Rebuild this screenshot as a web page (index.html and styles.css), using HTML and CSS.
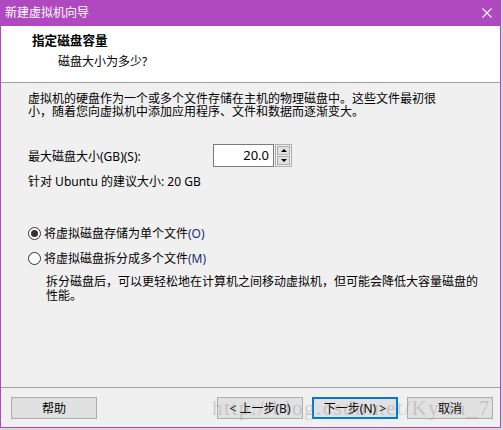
FILE: index.html
```html
<!DOCTYPE html>
<html lang="zh-CN">
<head>
    <meta charset="UTF-8">
    <title>新建虚拟机向导</title>
    <link rel="stylesheet" href="styles.css">
</head>
<body>
    <div class="window">
        <div class="titlebar">
            <span class="title">新建虚拟机向导</span>
            <svg class="close" width="10" height="10" viewBox="0 0 10 10">
                <path d="M0.5 0.5 L9.5 9.5 M9.5 0.5 L0.5 9.5" stroke="#fff" stroke-width="1.1" fill="none"/>
            </svg>
        </div>

        <div class="header">
            <div class="header-title">指定磁盘容量</div>
            <div class="header-sub">磁盘大小为多少?</div>
        </div>

        <div class="content">
            <p class="intro">虚拟机的硬盘作为一个或多个文件存储在主机的物理磁盘中。这些文件最初很<br>小，随着您向虚拟机中添加应用程序、文件和数据而逐渐变大。</p>

            <div class="size-row">
                <span class="size-label">最大磁盘大小(GB)(S):</span>
                <div class="spin">
                    <div class="spin-value">20.0</div>
                    <div class="spin-btns">
                        <div class="spin-btn"><span class="tri up"></span></div>
                        <div class="spin-btn"><span class="tri down"></span></div>
                    </div>
                </div>
            </div>
            <p class="hint">针对 Ubuntu 的建议大小: 20 GB</p>

            <div class="radio-row first">
                <span class="radio checked"></span>
                <span>将虚拟磁盘存储为单个文件<span class="key">(O)</span></span>
            </div>
            <div class="radio-row">
                <span class="radio"></span>
                <span>将虚拟磁盘拆分成多个文件<span class="key">(M)</span></span>
            </div>
            <p class="radio-desc">拆分磁盘后，可以更轻松地在计算机之间移动虚拟机，但可能会降低大容量磁盘的<br>性能。</p>
        </div>

        <div class="footer">
            <button class="btn">帮助</button>
            <div class="spacer"></div>
            <button class="btn">&lt; 上一步(B)</button>
            <button class="btn default">下一步(N) &gt;</button>
            <button class="btn">取消</button>
            <div class="watermark">http://blog.csdn.net/Kylin_7</div>
        </div>
    </div>
</body>
</html>
```

FILE: styles.css
```css
body {
    margin: 0;
    padding: 0;
    background: #d9d9d9;
    font-family: "Noto Sans", "Noto Sans CJK SC", sans-serif;
    font-size: 12px;
    color: #000;
}

.window {
    width: 501px;
    height: 428px;
    box-sizing: border-box;
    border: 1px solid #b048c0;
    border-top: none;
    background: #f0f0f0;
    display: flex;
    flex-direction: column;
}

.titlebar {
    height: 26px;
    background: #b048c0;
    color: #fff;
    display: flex;
    align-items: center;
    justify-content: space-between;
    padding: 0 9px 0 5px;
    margin: 0 -1px;
}
.title { line-height: 14px; }

.header {
    background: #fff;
    border-bottom: 1px solid #a0a0a0;
    padding: 7px 0 0 31px;
    box-sizing: border-box;
    height: 57px;
}
.header-title {
    font-weight: bold;
    font-size: 12.6px;
    line-height: 16px;
}
.header-sub {
    margin: 5px 0 0 26px;
    line-height: 16px;
}

.content {
    flex: 1;
    padding: 9px 0 0 27px;
}
.content p { margin: 0; }

.intro { line-height: 13px; }

.size-row {
    display: flex;
    align-items: center;
    margin-top: 26px;
    height: 23px;
}
.size-label { width: 185px; }

.spin {
    display: flex;
    align-items: center;
}
.spin-value {
    width: 61px;
    height: 23px;
    box-sizing: border-box;
    border: 1px solid #7a7a7a;
    background: #fff;
    text-align: right;
    padding-right: 4px;
    line-height: 21px;
    font-size: 13px;
}
.spin-btns {
    margin-left: 1px;
    height: 23px;
    width: 17px;
    box-sizing: border-box;
    border: 1px solid #adadad;
    padding: 1px;
    display: flex;
    flex-direction: column;
    gap: 1px;
}
.spin-btn {
    flex: 1;
    background: #e1e1e1;
    border: 1px solid #adadad;
    display: flex;
    align-items: center;
    justify-content: center;
}
.tri {
    width: 0;
    height: 0;
    border-left: 3px solid transparent;
    border-right: 3px solid transparent;
}
.tri.up { border-bottom: 3px solid #000; }
.tri.down { border-top: 3px solid #000; }

.content .hint {
    margin-top: 8px;
    line-height: 14px;
}

.radio-row {
    display: flex;
    align-items: center;
    gap: 3px;
    height: 14px;
    margin-top: 11px;
}
.radio-row.first { margin-top: 37px; }
.radio {
    width: 13px;
    height: 13px;
    box-sizing: border-box;
    border: 1px solid #333;
    border-radius: 50%;
    background: #fff;
    position: relative;
}
.radio.checked::after {
    content: "";
    position: absolute;
    left: 2px;
    top: 2px;
    width: 7px;
    height: 7px;
    border-radius: 50%;
    background: #333;
}
.key { color: #1c2a78; }

.content .radio-desc {
    margin: 10px 0 0 18px;
    line-height: 14px;
}

.footer {
    border-top: 1px solid #a0a0a0;
    display: flex;
    align-items: flex-start;
    padding: 9px 7px 0 10px;
    box-sizing: border-box;
    height: 40px;
    gap: 9px;
    position: relative;
}
.spacer { flex: 1; }

.btn {
    width: 86px;
    height: 22px;
    box-sizing: border-box;
    border: 1px solid #adadad;
    background: #e1e1e1;
    font-family: inherit;
    font-size: 12px;
    color: #000;
    padding: 0;
    margin: 0;
}
.btn.default { border: 2px solid #0078d7; }

.watermark {
    position: absolute;
    left: 211px;
    top: 8px;
    font-family: "Liberation Serif", serif;
    font-size: 21px;
    letter-spacing: 1.5px;
    color: rgba(140, 140, 140, 0.35);
    pointer-events: none;
    white-space: nowrap;
}
```
